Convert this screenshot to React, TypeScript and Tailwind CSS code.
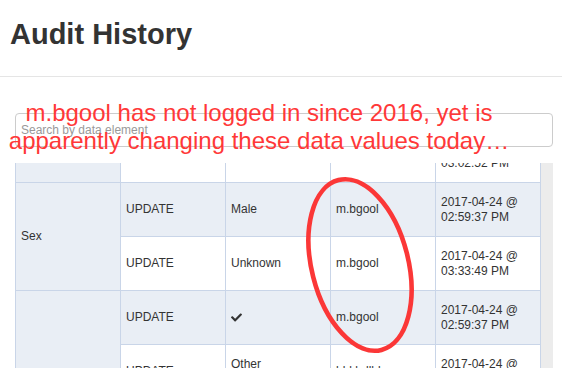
import { FaCheck } from 'react-icons/fa'

interface AuditRow {
	type: string
	value: React.ReactNode
	user: string
	date: string
}

interface AuditGroup {
	element: string
	rows: AuditRow[]
}

const GROUPS: AuditGroup[] = [
	{
		element: 'Age in years',
		rows: [
			{ type: 'UPDATE', value: '34', user: 'm.bgool', date: '2017-04-24 @ 02:59:37 PM' },
			{ type: 'UPDATE', value: '35', user: 'm.bgool', date: '2017-04-24 @ 03:02:52 PM' }
		]
	},
	{
		element: 'Sex',
		rows: [
			{ type: 'UPDATE', value: 'Male', user: 'm.bgool', date: '2017-04-24 @ 02:59:37 PM' },
			{ type: 'UPDATE', value: 'Unknown', user: 'm.bgool', date: '2017-04-24 @ 03:33:49 PM' }
		]
	},
	{
		element: 'Ethnicity',
		rows: [
			{ type: 'UPDATE', value: <FaCheck className="w-[11px] h-[11px] text-[#333]" />, user: 'm.bgool', date: '2017-04-24 @ 02:59:37 PM' },
			{ type: 'UPDATE', value: 'Other Unspecified', user: 'hbkbdlhl', date: '2017-04-24 @ 03:33:49 PM' },
			{ type: 'UPDATE', value: 'Unknown', user: 'm.bgool', date: '2017-04-24 @ 03:35:10 PM' },
			{ type: 'UPDATE', value: 'Male', user: 'm.bgool', date: '2017-04-24 @ 03:36:02 PM' }
		]
	}
]

const cell = 'border border-[#c9d5e8] px-[5px] py-[11.5px] align-middle'

export default function App() {
	return (
		<div className="relative w-[562px] h-[368px] overflow-hidden bg-white font-['Liberation_Sans',Arial,sans-serif] text-[#333]">
			{/* Header */}
			<div className="h-[77px] border-b border-[#e5e5e5] px-[10px] pt-[16px]">
				<h1 className="text-[29px] leading-[36px] font-bold text-[#333]">Audit History</h1>
			</div>

			{/* Search */}
			<div className="pl-[15px] pr-[9px] pt-[36px]">
				<input
					type="text"
					placeholder="Search by data element"
					className="w-full h-[34px] rounded-[4px] border border-[#ccc] px-[5px] text-[12px] text-[#555] placeholder:text-[#999] outline-none"
				/>
			</div>

			{/* Table with scroll strip */}
			<div className="flex pl-[15px] pr-[9px] mt-[16px] h-[205px] overflow-hidden">
				<div className="flex-1 overflow-hidden">
					<table className="w-full table-fixed border-collapse text-[12px] leading-[15px] text-[#333] -mt-[89px]">
						<tbody>
							{GROUPS.map((group) =>
								group.rows.map((row, i) => {
									const striped = (i % 2 === 0)
									return (
										<tr key={group.element + i} className={striped ? 'bg-[#e9eef5]' : 'bg-white'}>
											{i === 0 && (
												<td rowSpan={group.rows.length} className={cell + ' bg-[#e9eef5]'}>
													{group.element}
												</td>
											)}
											<td className={cell}>{row.type}</td>
											<td className={cell}>{row.value}</td>
											<td className={cell}>{row.user}</td>
											<td className={cell}>{row.date}</td>
										</tr>
									)
								})
							)}
						</tbody>
					</table>
				</div>
				<div className="w-[12px] bg-[#ececec]" />
			</div>

			{/* Annotation */}
			<div className="absolute left-0 top-[99px] w-[518px] flex flex-col items-center text-[24px] leading-[28px] text-[#ff3838] whitespace-nowrap pointer-events-none">
				<span>m.bgool has not logged in since 2016, yet is</span>
				<span>apparently changing these data values today…</span>
			</div>
			<svg className="absolute inset-0 pointer-events-none" width="562" height="368">
				<ellipse cx="360" cy="265" rx="48.3" ry="87.6" transform="rotate(-14.2 360 265)" fill="none" stroke="#fb3737" strokeWidth="4.6" />
			</svg>
		</div>
	)
}
